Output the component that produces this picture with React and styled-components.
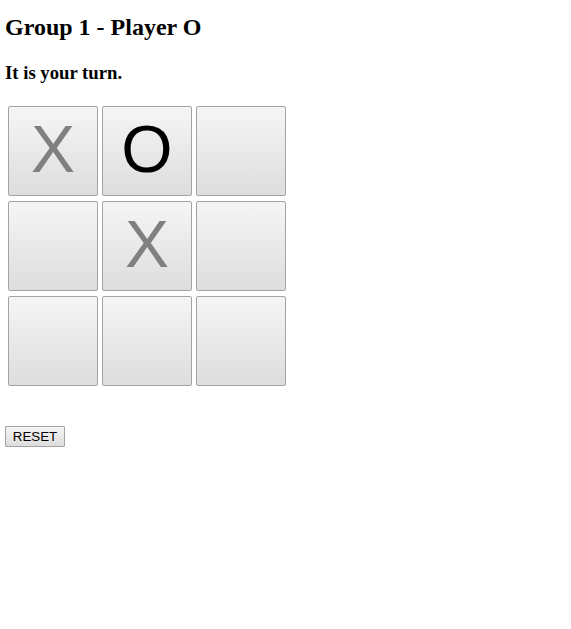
import React from "react";
import styled, { createGlobalStyle } from "styled-components";

const Global = createGlobalStyle`
  html, body { margin: 0; padding: 0; background: #fff; }
  body { font-family: "Liberation Serif", "Times New Roman", serif; color: #000; }
`;

const Page = styled.div`
  padding: 0 5px;
`;

const Title = styled.h2`
  font-size: 24px;
  font-weight: bold;
  margin: 14px 0 0;
  line-height: 27px;
`;

const Status = styled.h3`
  font-size: 18.72px;
  font-weight: bold;
  margin: 21px 0 0;
  line-height: 21px;
`;

const Board = styled.div`
  display: grid;
  grid-template-columns: repeat(3, 90px);
  grid-auto-rows: 90px;
  column-gap: 4px;
  row-gap: 5px;
  margin: 23px 0 0 3px;
`;

const Cell = styled.button`
  box-sizing: border-box;
  width: 90px;
  height: 90px;
  padding: 0 0 4px;
  margin: 0;
  border: 1px solid #a3a3a3;
  border-radius: 2px;
  background: linear-gradient(to bottom, #f5f5f5, #dddddd);
  font-family: "Liberation Sans", Arial, sans-serif;
  font-size: 66px;
  line-height: 1;
  color: ${(p) => (p.$mark === "O" ? "#000" : "#808080")};
  display: flex;
  align-items: center;
  justify-content: center;
`;

const Reset = styled.button`
  box-sizing: border-box;
  margin-top: 40px;
  height: 21px;
  width: 60px;
  padding: 0;
  border: 1px solid #a3a3a3;
  border-radius: 1px;
  background: linear-gradient(to bottom, #f5f5f5, #dddddd);
  font-family: "Liberation Sans", Arial, sans-serif;
  font-size: 13.33px;
  color: #000;
`;

const cells = ["X", "O", "", "", "X", "", "", "", ""];

export default function App() {
  return (
    <Page>
      <Global />
      <Title>Group 1 - Player O</Title>
      <Status>It is your turn.</Status>
      <Board>
        {cells.map((c, i) => (
          <Cell key={i} $mark={c}>
            {c}
          </Cell>
        ))}
      </Board>
      <Reset>RESET</Reset>
    </Page>
  );
}
